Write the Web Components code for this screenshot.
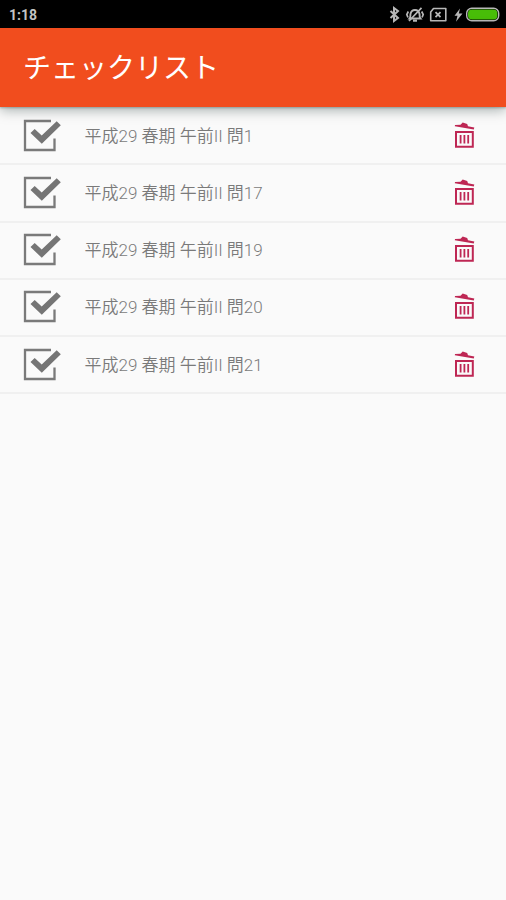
<!DOCTYPE html>
<html lang="ja">
<head>
<meta charset="utf-8">
<title>チェックリスト</title>
<style>
  body {
    margin: 0;
    background: #fafafa;
    font-family: Roboto, "Noto Sans CJK JP", sans-serif;
  }

  main { padding-top: 1px; }
</style>
</head>
<body>

<template id="status-bar-template">
  <style>
    :host {
      display: flex;
      align-items: center;
      justify-content: space-between;
      box-sizing: border-box;
      height: 28px;
      padding: 1px 6px 0 9px;
      background: #000;
      color: #c4c4c4;
      font-size: 14px;
      font-weight: 700;
    }

    .icons { display: flex; align-items: center; }
    svg { display: block; fill: none; stroke: #b8b8b8; }
  </style>

  <slot></slot>
  <div class="icons">
    <svg width="114" height="20" viewBox="0 0 114 20">
      <!-- Bluetooth -->
      <path d="M4.500 6l7.500 7-4 3v-13l4 3-7.500 7" stroke-width="2"/>
      <!-- Muted bell -->
      <path d="M23.500 13.500c1.300-1.500.7-3 1-4.500.5-2.500 2-4 4.500-4s4 1.500 4.500 4c.3 1.500-.3 3 1 4.500zM27 15.700h4" stroke-width="1.900"/>
      <path d="M35.500 2.800L23 16M22.300 6.500l-1.500 3 1.200 3M35.700 6.500l1.500 3-1.200 3" stroke-width="1.700"/>
      <!-- No SIM -->
      <path d="M47.500 3.500h12.300v12.300H44.700V7z" stroke-width="1.600" stroke-linejoin="round"/>
      <path d="M49.500 7.200l5 5M54.500 7.200l-5 5" stroke-width="1.800"/>
      <!-- Charging -->
      <path d="M74 3.500l-5.500 7.300h3l-1.500 6 6.500-8.300h-3.700z" fill="#b8b8b8" stroke="none"/>
      <rect x="80.700" y="3.200" width="32" height="12.600" rx="5" stroke-width="1.400"/>
      <rect x="82" y="4.500" width="29.400" height="10" rx="4" fill="#48bd08" stroke="none"/>
    </svg>
  </div>
</template>

<template id="app-bar-template">
  <style>
    :host {
      display: flex;
      align-items: center;
      box-sizing: border-box;
      position: relative;
      z-index: 1;
      height: 79px;
      padding: 3px 23px 0;
      background: #f14d1e;
      box-shadow: 0 1px 2px rgba(0, 30, 25, .25), 0 3px 12px rgba(0, 30, 25, .35);
      color: #fff;
    }

    h1 {
      margin: 0;
      font-size: 28px;
      font-weight: 400;
      line-height: 40px;
    }
  </style>

  <h1><slot></slot></h1>
</template>

<template id="check-item-template">
  <style>
    :host {
      display: flex;
      align-items: center;
      box-sizing: border-box;
      height: 57.250px;
      padding: 0 29px 0 22px;
      border-bottom: 2px solid #f0f0f0;
      color: #7a7a7a;
    }

    svg { display: block; flex: none; }
    .label {
      flex: 1;
      margin-left: 22.500px;
      font-size: 17px;
      font-weight: 350;
      line-height: 24px;
      white-space: nowrap;
    }
  </style>

  <svg width="40" height="36" viewBox="0 0 40 36">
    <path d="M29 3H3v29h29.500V20.500" fill="none" stroke="#7a7a7a" stroke-width="2.300"/>
    <path d="M8.500 15l4.200-4 7 6.500L34.700 3.200 38.800 7.200 19.800 25.800z" fill="#757575"/>
  </svg>
  <span class="label"><slot></slot></span>
  <svg width="24" height="30" viewBox="0 0 24 30">
    <path d="M3 11h16.800v14.800H3z" fill="none" stroke="#be2754" stroke-width="2"/>
    <path d="M7.600 14v8.500M11.400 14v8.500M15.200 14v8.500" stroke="#be2754" stroke-width="1.800"/>
    <path d="M2 4l5.500-.2 2.200-2.300 4.500 1.500.8 2.200 6.300 1.300-.5 2L1.800 5.300z" fill="#be2754"/>
  </svg>
</template>

<status-bar>1:18</status-bar>
<app-bar>チェックリスト</app-bar>
<main>
  <check-item>平成29 春期 午前II 問1</check-item>
  <check-item>平成29 春期 午前II 問17</check-item>
  <check-item>平成29 春期 午前II 問19</check-item>
  <check-item>平成29 春期 午前II 問20</check-item>
  <check-item>平成29 春期 午前II 問21</check-item>
</main>

<script>
/**
 * Base of our tags, fills the shadow DOM with the template named after the tag.
 */
class TemplateElement extends HTMLElement {
  constructor() {
    super()

    const template = document.getElementById(`${this.localName}-template`)
    this.root = this.attachShadow({ mode: 'open' })
    this.root.appendChild(template.content.cloneNode(true))
  }
}

/** Clock and system icons. */
class StatusBar extends TemplateElement {}

/** Title of the screen. */
class AppBar extends TemplateElement {}

/** A checked question with its delete icon. */
class CheckItem extends TemplateElement {}

customElements.define('status-bar', StatusBar)
customElements.define('app-bar', AppBar)
customElements.define('check-item', CheckItem)
</script>
</body>
</html>
